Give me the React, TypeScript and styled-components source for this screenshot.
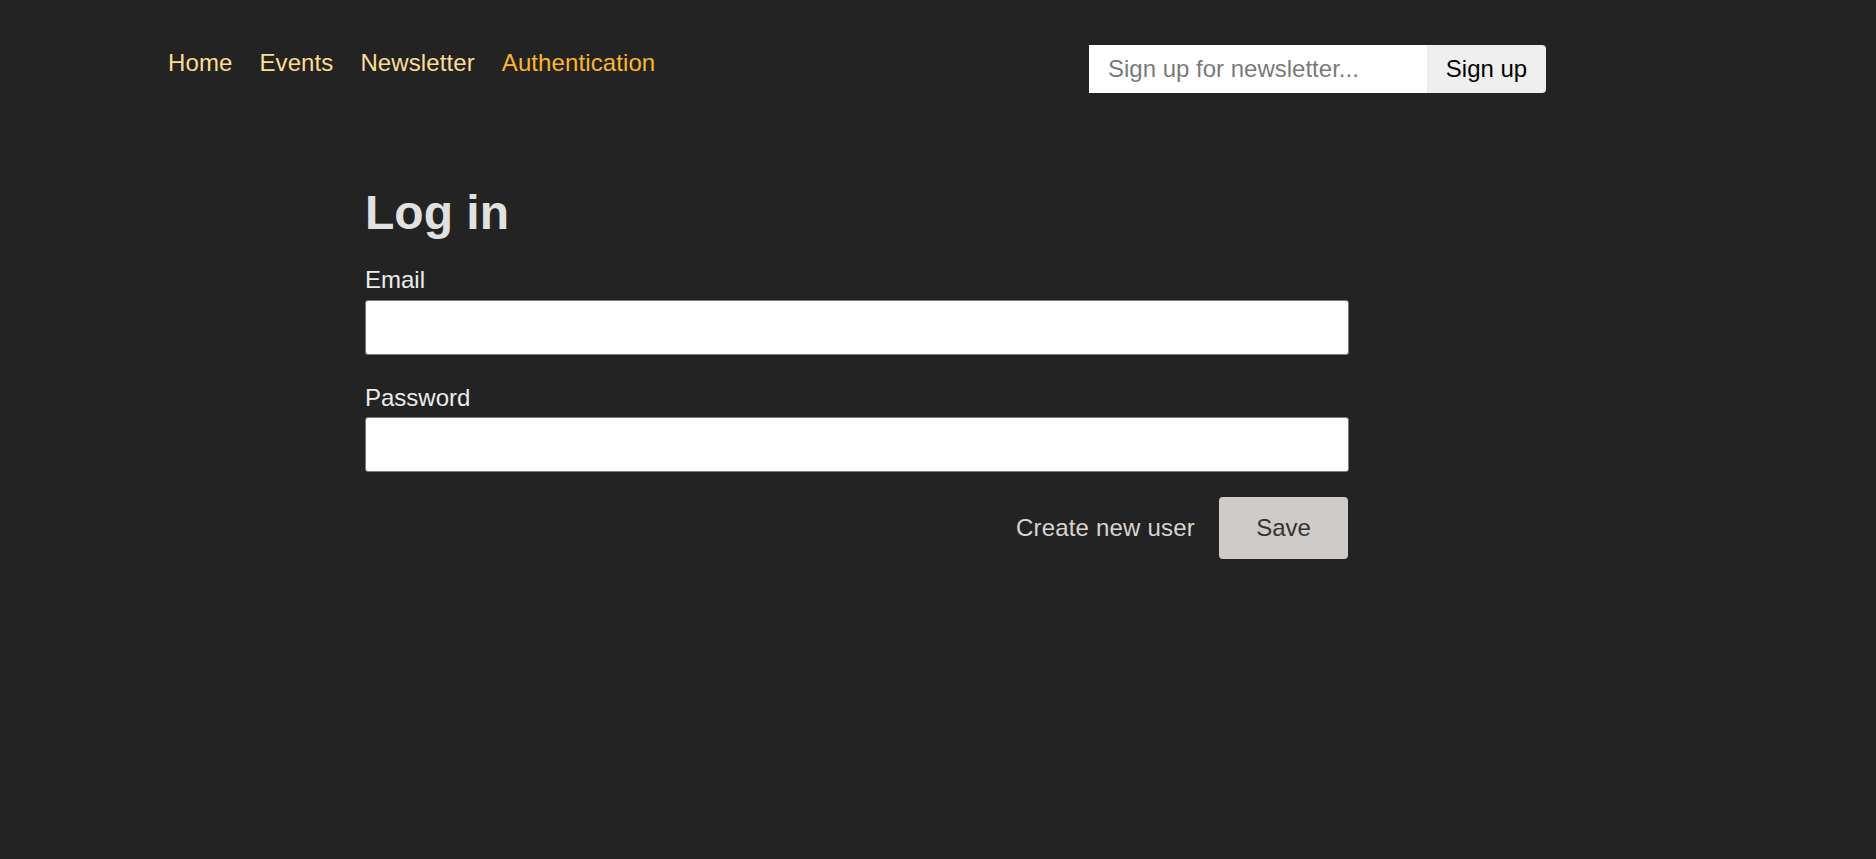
import React from "react";
import styled, { createGlobalStyle } from "styled-components";

const GlobalStyle = createGlobalStyle`
  * {
    box-sizing: border-box;
  }

  body {
    margin: 0;
    background-color: #232323;
    font-family: "Liberation Sans", Arial, sans-serif;
    color: #e2e2e2;
  }
`;

const Page = styled.div`
  width: 1714px;
  min-height: 859px;
`;

const Header = styled.header`
  display: flex;
  justify-content: space-between;
  align-items: flex-start;
  max-width: 1378px;
  margin: 0 auto;
  padding-top: 45px;
`;

const NavList = styled.ul`
  display: flex;
  gap: 27px;
  list-style: none;
  margin: 0;
  padding: 4px 0 0;
`;

const NavLink = styled.a<{ $active?: boolean }>`
  font-size: 24px;
  line-height: 1.15;
  letter-spacing: 0.1px;
  text-decoration: none;
  color: ${(p) => (p.$active ? "#fbb52f" : "#fcdc94")};
`;

const NewsletterForm = styled.form`
  display: flex;
  height: 48px;

  input {
    width: 338px;
    border: none;
    border-radius: 0;
    padding: 0 19px;
    font: inherit;
    font-size: 24px;
    color: #222;
    background: #fff;
    outline: none;
  }

  input::placeholder {
    color: #7a7a7a;
  }

  button {
    width: 119px;
    border: none;
    border-radius: 0 4px 4px 0;
    background: #efefef;
    color: #000;
    font: inherit;
    font-size: 24px;
    cursor: pointer;
  }
`;

const LoginForm = styled.form`
  width: 984px;
  margin: 92px auto 0;
`;

const Title = styled.h1`
  margin: 0 0 26px;
  font-size: 48px;
  line-height: 1.15;
  font-weight: 700;
  color: #e1e1e1;
`;

const Field = styled.p`
  margin: 0 0 29px;

  label {
    display: block;
    font-size: 24px;
    line-height: 1.15;
    color: #ececec;
    margin-bottom: 6px;
  }

  input {
    display: block;
    width: 100%;
    height: 55px;
    border: 1px solid #7a7a7a;
    border-radius: 3px;
    background: #fff;
    font: inherit;
    font-size: 24px;
    padding: 0 12px;
  }
`;

const Actions = styled.div`
  display: flex;
  justify-content: flex-end;
  align-items: center;
  gap: 24px;
  margin-top: -4px;
  padding-right: 1px;
`;

const TextLink = styled.a`
  font-size: 24px;
  letter-spacing: 0.2px;
  color: #d8d5d1;
  text-decoration: none;
`;

const SaveButton = styled.button`
  width: 129px;
  height: 62px;
  border: none;
  border-radius: 4px;
  background: #cfcbc8;
  color: #333;
  font: inherit;
  font-size: 24px;
  cursor: pointer;
`;

const links = [
  { label: "Home" },
  { label: "Events" },
  { label: "Newsletter" },
  { label: "Authentication", active: true },
];

export default function App() {
  return (
    <Page>
      <GlobalStyle />
      <Header>
        <nav>
          <NavList>
            {links.map((l) => (
              <li key={l.label}>
                <NavLink href="#" $active={l.active}>
                  {l.label}
                </NavLink>
              </li>
            ))}
          </NavList>
        </nav>
        <NewsletterForm onSubmit={(e) => e.preventDefault()}>
          <input type="email" placeholder="Sign up for newsletter..." />
          <button>Sign up</button>
        </NewsletterForm>
      </Header>
      <LoginForm onSubmit={(e) => e.preventDefault()}>
        <Title>Log in</Title>
        <Field>
          <label htmlFor="email">Email</label>
          <input id="email" type="email" name="email" />
        </Field>
        <Field>
          <label htmlFor="password">Password</label>
          <input id="password" type="password" name="password" />
        </Field>
        <Actions>
          <TextLink href="#">Create new user</TextLink>
          <SaveButton>Save</SaveButton>
        </Actions>
      </LoginForm>
    </Page>
  );
}
